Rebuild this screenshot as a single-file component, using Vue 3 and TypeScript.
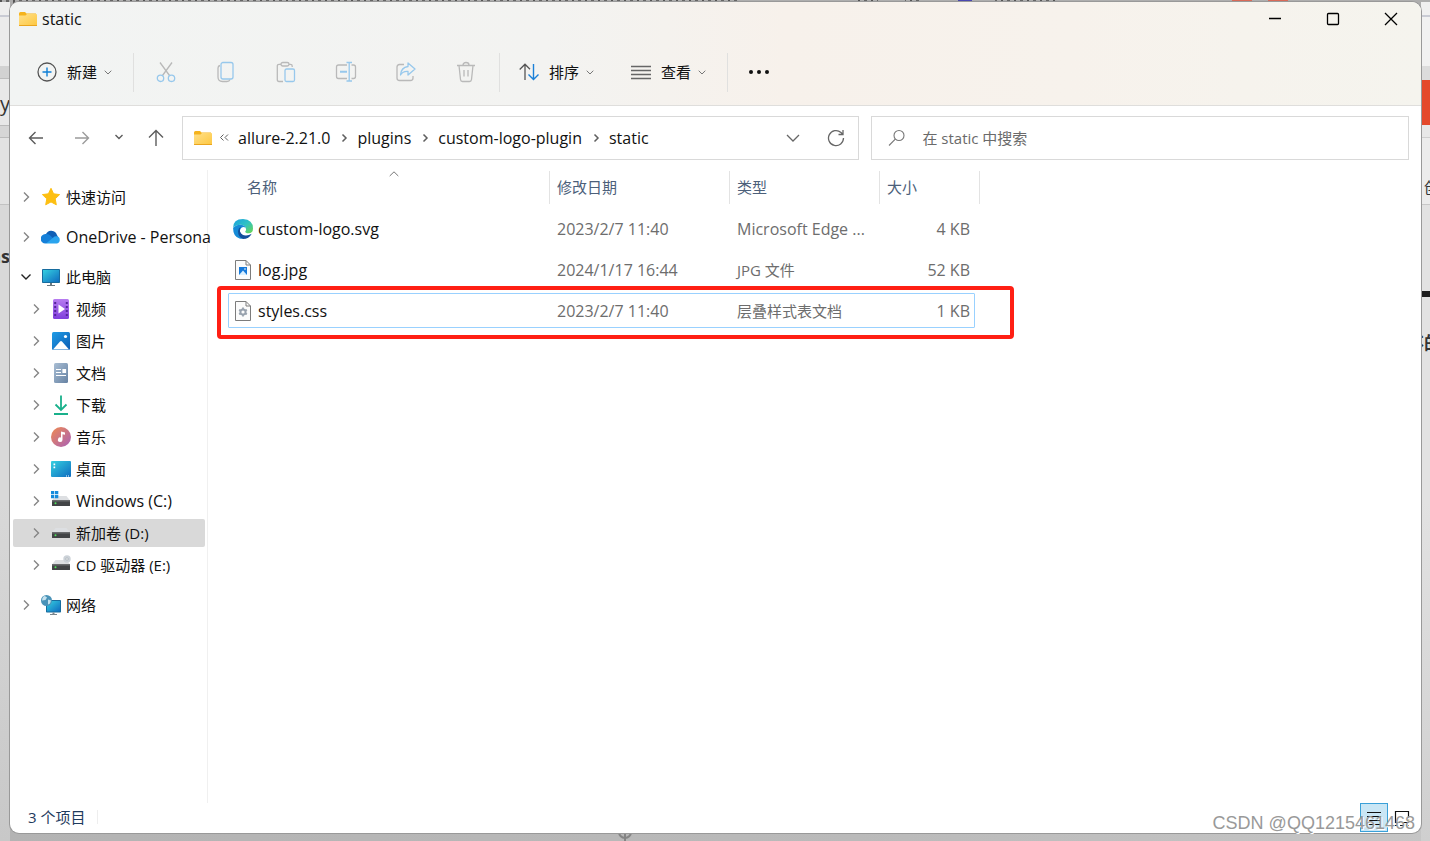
<script setup lang="ts">
import { ref } from 'vue'

interface TreeItem {
  icon: string
  label: string
  level: number
  open?: boolean
  gap?: boolean
  active?: boolean
  latin?: boolean
}
interface FileRow {
  icon: string
  name: string
  date: string
  type: string
  size: string
  selected?: boolean
  latinType?: boolean
}

const query = ref('')
const tools = [
  { id: 'cut', title: '剪切' },
  { id: 'copy', title: '复制' },
  { id: 'paste', title: '粘贴' },
  { id: 'rename', title: '重命名' },
  { id: 'share', title: '共享' },
  { id: 'delete', title: '删除' },
]
const crumbs = ['allure-2.21.0', 'plugins', 'custom-logo-plugin', 'static']
const tree: TreeItem[] = [
  { icon: 'star', label: '快速访问', level: 0, gap: true },
  { icon: 'cloud', label: 'OneDrive - Persona', level: 0, gap: true, latin: true },
  { icon: 'pc', label: '此电脑', level: 0, open: true },
  { icon: 'video', label: '视频', level: 1 },
  { icon: 'picture', label: '图片', level: 1 },
  { icon: 'document', label: '文档', level: 1 },
  { icon: 'download', label: '下载', level: 1 },
  { icon: 'music', label: '音乐', level: 1 },
  { icon: 'desktop', label: '桌面', level: 1 },
  { icon: 'windrive', label: 'Windows (C:)', level: 1, latin: true },
  { icon: 'drive', label: '新加卷 (D:)', level: 1, active: true },
  { icon: 'cddrive', label: 'CD 驱动器 (E:)', level: 1, gap: true },
  { icon: 'network', label: '网络', level: 0 },
]
const files: FileRow[] = [
  { icon: 'edge', name: 'custom-logo.svg', date: '2023/2/7 11:40', type: 'Microsoft Edge ...', size: '4 KB', latinType: true },
  { icon: 'jpg', name: 'log.jpg', date: '2024/1/17 16:44', type: 'JPG 文件', size: '52 KB' },
  { icon: 'css', name: 'styles.css', date: '2023/2/7 11:40', type: '层叠样式表文档', size: '1 KB', selected: true },
]
</script>

<template>
  <div class="screen">
    <div class="behind behind-top" aria-hidden="true"></div>
    <div class="behind behind-left" aria-hidden="true">
      <span class="frag frag-y">oy</span>
      <span class="frag frag-s">ns</span>
    </div>
    <div class="behind behind-right" aria-hidden="true">
      <i class="orange"></i>
      <span class="frag frag-c">创</span>
      <i class="bar"></i>
      <span class="frag frag-d">不的</span>
    </div>
    <svg class="target" viewBox="0 0 18 18" aria-hidden="true"><circle cx="9" cy="9" r="6" /><path d="M9 0v18M0 9h18" /></svg>

    <main class="window">
      <header class="chrome">
        <div class="titlebar">
          <svg class="folder" viewBox="0 0 18 14"><path d="M0 1.500Q0 0 1.500 0H6l1.500 1.500H17V5H0z" fill="#f5b31d" /><path d="M0 3.500h6.500L8 2h9.200q.8 0 .8.800V13.200q0 .8-.8.800H.8Q0 14 0 13.200z" fill="url(#fold)" /><path d="M0 13h18v.4q0 .6-.8.600H.8q-.8 0-.8-.6z" fill="#eaa51e" /></svg>
          <h1>static</h1>
          <div class="controls">
            <button type="button" aria-label="最小化"><svg width="14" height="14" viewBox="0 0 14 14"><path d="M1 6.500h12" /></svg></button>
            <button type="button" aria-label="最大化"><svg width="14" height="14" viewBox="0 0 14 14"><rect x="1.500" y="1.500" width="11" height="11" rx="1" /></svg></button>
            <button type="button" aria-label="关闭"><svg width="14" height="14" viewBox="0 0 14 14"><path d="M1 1l12 12M13 1L1 13" /></svg></button>
          </div>
        </div>
        <div class="toolbar">
          <button type="button" class="cmd">
            <svg width="20" height="20" viewBox="0 0 20 20"><circle cx="10" cy="10" r="9" stroke="#555" /><path d="M10 5.500v9M5.500 10h9" stroke="#0f7fd6" stroke-width="1.400" /></svg>
            <span>新建</span>
            <svg class="caret" viewBox="0 0 8 5"><path d="M.7.700L4 4 7.300.700" /></svg>
          </button>
          <i class="sep"></i>
          <button v-for="t in tools" :key="t.id" type="button" class="tool" :title="t.title" :aria-label="t.title" disabled>
            <svg width="22" height="22" viewBox="0 0 22 22">
              <g v-if="t.id === 'cut'"><path d="M5 1.500l9.500 13M17 1.500l-9.500 13" /><g class="b"><circle cx="5.500" cy="17.300" r="3.200" /><circle cx="16.500" cy="17.300" r="3.200" /></g></g>
              <g v-else-if="t.id === 'copy'"><path d="M5 4.500Q3 5 3 7v9q0 4.500 4.500 4.500H12q2.300 0 3-2" /><rect class="b" x="6" y="1.500" width="12" height="16.500" rx="2" /></g>
              <g v-else-if="t.id === 'paste'"><path d="M8 20.500H4q-1.700 0-1.700-1.700V5Q2.300 3.300 4 3.300h2M14 3.300h1.500q1.700 0 1.700 1.700v1" /><rect x="6" y="1.500" width="8" height="3.500" rx="1.700" /><rect class="b" x="10" y="8" width="9.500" height="12.500" rx="1.500" /></g>
              <g v-else-if="t.id === 'rename'"><path d="M12 4H3.500Q1.500 4 1.500 6v9.500q0 2 2 2H12M16.500 4h2q2 0 2 2v9.500q0 2-2 2h-2" /><path class="b" d="M11.500 1.500H17M11.500 20H17M14.200 1.500V20" /><path class="b" d="M5 10.800h7" stroke-width="2" /></g>
              <g v-else-if="t.id === 'share'"><path d="M9 3.500H4.500q-2.500 0-2.500 2.500v11q0 2.500 2.500 2.500h11q2.500 0 2.500-2.500v-2" /><path class="b" d="M13 2l7 6-7 6v-3.500q-5-.5-7.500 3.500Q6 6.500 13 5.500z" stroke-linejoin="round" /></g>
              <g v-else><path d="M2 4.500h18M8 4q0-2.500 3-2.500T14 4M4 4.500l1.500 14q.2 2 2 2h7q1.800 0 2-2L18 4.500M9 9v6.500M13 9v6.500" /></g>
            </svg>
          </button>
          <i class="sep"></i>
          <button type="button" class="cmd sort">
            <svg width="20" height="20" viewBox="0 0 20 20"><path d="M6 18V3M.7 7.500L6 2.200l5 5" stroke="#555" /><path d="M14.500 2v15M9.500 12.500l5 5 5-5" stroke="#1a80d8" stroke-width="1.400" /></svg>
            <span>排序</span>
            <svg class="caret" viewBox="0 0 8 5"><path d="M.7.700L4 4 7.300.700" /></svg>
          </button>
          <button type="button" class="cmd view">
            <svg width="20" height="20" viewBox="0 0 20 20"><path d="M0 4.500h20M0 8.500h20M0 12.500h20M0 16.500h20" stroke="#666" /></svg>
            <span>查看</span>
            <svg class="caret" viewBox="0 0 8 5"><path d="M.7.700L4 4 7.300.700" /></svg>
          </button>
          <i class="sep"></i>
          <button type="button" class="tool more" aria-label="更多"><svg width="22" height="6" viewBox="0 0 22 6"><circle cx="3" cy="3" r="2" /><circle cx="11" cy="3" r="2" /><circle cx="19" cy="3" r="2" /></svg></button>
        </div>
      </header>

      <nav class="navbar" aria-label="位置">
        <button type="button" class="nb" aria-label="后退"><svg width="16" height="16" viewBox="0 0 16 16"><path d="M15 8H1.500M7.500 2l-6 6 6 6" /></svg></button>
        <button type="button" class="nb dim" aria-label="前进"><svg width="16" height="16" viewBox="0 0 16 16"><path d="M1 8h13.500M8.500 2l6 6-6 6" /></svg></button>
        <button type="button" class="nb small" aria-label="最近位置"><svg width="10" height="16" viewBox="0 0 10 16"><path d="M1.500 5L5 8.500 8.500 5" /></svg></button>
        <button type="button" class="nb" aria-label="向上"><svg width="16" height="18" viewBox="0 0 16 18"><path d="M8 17V1.500M1 8.500l7-7 7 7" /></svg></button>
        <div class="address">
          <svg class="folder" viewBox="0 0 18 14"><path d="M0 1.500Q0 0 1.500 0H6l1.500 1.500H17V5H0z" fill="#f5b31d" /><path d="M0 3.500h6.500L8 2h9.200q.8 0 .8.800V13.200q0 .8-.8.800H.8Q0 14 0 13.200z" fill="url(#fold)" /><path d="M0 13h18v.4q0 .6-.8.600H.8q-.8 0-.8-.6z" fill="#eaa51e" /></svg>
          <svg class="step" viewBox="0 0 26 16"><path d="M11.500 4.500L8.500 7.500l3 3M16 4.500L13 7.500l3 3" /></svg>
          <template v-for="(c, i) in crumbs" :key="c">
            <svg v-if="i > 0" class="step" viewBox="0 0 26 16"><path d="M11.500 4.500L15 8l-3.500 3.500" stroke-width="1.500" /></svg>
            <a href="#">{{ c }}</a>
          </template>
          <button type="button" class="drop" aria-label="历史记录"><svg width="14" height="14" viewBox="0 0 14 14"><path d="M1 4l6 6 6-6" /></svg></button>
          <button type="button" class="reload" aria-label="刷新"><svg width="18" height="18" viewBox="0 0 18 18"><path d="M16.500 9A7.500 7.500 0 1 1 14 3.500L16 5.500M16 1v4.500h-4.500" /></svg></button>
        </div>
        <label class="search">
          <svg width="18" height="18" viewBox="0 0 18 18"><circle cx="11" cy="6.500" r="5" /><path d="M7.300 10.200L1 16.500" /></svg>
          <input v-model="query" type="text" placeholder="在 static 中搜索" aria-label="搜索" />
        </label>
      </nav>

      <div class="body">
        <aside class="tree">
          <a v-for="n in tree" :key="n.label" href="#" class="node" :class="{ child: n.level === 1, gap: n.gap, active: n.active, latin: n.latin }">
            <svg class="twist" :class="{ open: n.open }" viewBox="0 0 12 12"><path v-if="n.open" d="M1.500 3.500L6 8l4.500-4.500" /><path v-else d="M4 1.500L8.500 6 4 10.500" /></svg>
            <svg class="ico" viewBox="0 0 20 20">
              <path v-if="n.icon === 'star'" d="M10 1.300l2.600 5.500 6 .8-4.400 4.200 1.100 6L10 14.900l-5.300 2.900 1.100-6L1.400 7.600l6-.8z" fill="#fdbf12" stroke="#fdbf12" stroke-linejoin="round" />
              <g v-else-if="n.icon === 'cloud'"><path d="M5 7a6 6 0 0 1 10-1l2 4-9 5z" fill="#0f5fb5" /><path d="M4.500 16.500A4.700 4.700 0 0 1 4.300 7.100q2.500-.6 4.700 1.200l6 6z" fill="#1580d9" /><path d="M5 16.600L13.500 9.600q1-.6 2.500-.3a3.800 3.800 0 0 1 0 7.300z" fill="#2aa4ee" /></g>
              <g v-else-if="n.icon === 'pc'"><rect x="1" y="2" width="18" height="14" rx=".8" fill="#176c9e" /><rect x="2" y="3" width="16" height="12" fill="url(#screen)" /><path d="M9 16h2v2h3v1H6v-1h3z" fill="#69777f" /></g>
              <g v-else-if="n.icon === 'video'"><rect x="2" y="0" width="16" height="20" rx="1.500" fill="url(#violet)" /><path d="M3.200 3h2v2h-2zM3.200 7h2v2h-2zM3.200 11h2v2h-2zM3.200 15h2v2h-2zM14.800 3h2v2h-2zM14.800 7h2v2h-2zM14.800 11h2v2h-2zM14.800 15h2v2h-2z" fill="#54259b" /><path d="M7.500 5.500l6.500 4.500-6.500 4.500z" fill="#fff" /></g>
              <g v-else-if="n.icon === 'picture'"><rect x="1" y="1" width="18" height="18" rx="1.500" fill="url(#blue)" /><path d="M2 18.500l7-8q1-1 2 0l7 8z" fill="#fff" /><circle cx="14.500" cy="5.500" r="1.600" fill="#fff" /></g>
              <g v-else-if="n.icon === 'document'"><rect x="3" y="0" width="14" height="20" rx="1.500" fill="url(#slate)" /><path d="M5 6.500h5M5 9.500h5M5 12.500h10M12 6.500h2.500v3H12z" stroke="#fff" stroke-width="1.200" fill="#fff" /></g>
              <path v-else-if="n.icon === 'download'" d="M10 .5V15M4.500 9.500L10 15l5.500-5.500M3 19h14" fill="none" stroke="#19b08b" stroke-width="1.800" />
              <g v-else-if="n.icon === 'music'"><circle cx="10" cy="10" r="10" fill="url(#tune)" /><path d="M10 4.500l4 1v2.300l-2.500-.6v5.500a2.300 2.300 0 1 1-1.500-2.100z" fill="#fff" /></g>
              <g v-else-if="n.icon === 'desktop'"><rect x="0" y="2" width="20" height="16" rx="1" fill="url(#screen)" /><path d="M2.500 4.500h1.700v1.700H2.500zM2.500 7.500h1.700v1.700H2.500zM15 16.500h1v1h-1zM17 16.500h1v1h-1z" fill="#fff" /></g>
              <g v-else-if="n.icon === 'network'"><rect x="5" y="5" width="15" height="12.500" rx=".8" fill="#176c9e" /><rect x="6" y="6" width="13" height="10.500" fill="url(#screen)" /><path d="M11.500 17.500h2v1.500h2.500v1h-7v-1h2.500z" fill="#7a868d" /><circle cx="5.500" cy="5.500" r="5.500" fill="#4a93b8" /><path d="M3 1q2 0 3 1.500L4.500 5 1 5.500Q1 2.500 3 1zM7 4.500l3 1-1 3-2 1z" fill="#c5e2ee" /></g>
              <g v-else>
                <path d="M4.500 5h11L19 9.500H1z" fill="#dddfe2" /><rect x="1" y="9" width="18" height="6" rx=".6" fill="#424446" /><path d="M1 9h18v1.500H1z" fill="#6a6c6e" /><circle cx="4.500" cy="12.300" r="1" fill="#4fe05b" />
                <path v-if="n.icon === 'windrive'" d="M0 0h3.300v3.300H0zM4 0h3.300v3.300H4zM0 4h3.300v3.300H0zM4 4h3.300v3.300H4z" fill="#168bdc" />
                <g v-if="n.icon === 'cddrive'"><circle cx="16" cy="4" r="3.700" fill="#ccd2d8" /><circle cx="16" cy="4" r="1.200" fill="#fff" stroke="#9da6ae" stroke-width=".7" /></g>
              </g>
            </svg>
            <span>{{ n.label }}</span>
          </a>
        </aside>

        <section class="listing">
          <table>
            <colgroup><col class="c1" /><col class="c2" /><col class="c3" /><col class="c4" /></colgroup>
            <thead>
              <tr>
                <th scope="col">名称<svg class="asc" viewBox="0 0 10 6"><path d="M.7 5L5 .8 9.300 5" /></svg></th>
                <th scope="col">修改日期</th>
                <th scope="col">类型</th>
                <th scope="col">大小</th>
              </tr>
            </thead>
            <tbody>
              <tr v-for="f in files" :key="f.name" :class="{ selected: f.selected }">
                <td>
                  <div class="fname">
                    <svg width="20" height="20" viewBox="0 0 20 20">
                      <g v-if="f.icon === 'edge'">
                        <path d="M.1 9Q0 0 10 0q10 .5 10 9.500 0 4.800-4.500 4.800-3.300 0-3.300-1.800 1-1 .9-2.500Q12.500 6 8 5.700 3 5.500.1 9z" fill="url(#wave)" />
                        <path d="M.1 9Q3 5.300 8 5.700q4.500.3 5.100 4.300-.1-1.900-2.800-2-3.800 1-3.300 5 1 4.500 6 5-3 2.500-6.500 1.500Q0 17.500.1 9z" fill="#168bd7" />
                        <path d="M5 12q.3-3 3-4.500-1.500 2-1 5 1.500 4 6 4 3 0 5.700-1.800Q16 20 10 20q-5-2-5-8z" fill="#124f9c" />
                      </g>
                      <g v-else>
                        <path d="M2.500.5h10.500l4.500 4.500v14.500h-15z" fill="#fbfbfb" stroke="#7c7c7c" /><path d="M13 .5V5h4.500" fill="none" stroke="#7c7c7c" />
                        <g v-if="f.icon === 'jpg'"><rect x="6" y="7" width="8" height="8" fill="#1679da" /><path d="M6 15l4-4.500 4 4.500z" fill="#d9efff" /><circle cx="12" cy="9" r=".8" fill="#fff" /></g>
                        <g v-else><circle cx="10" cy="11" r="2.600" fill="none" stroke="#98a2ae" stroke-width="2" /><path d="M10 6.500v2M10 13.500v2M6.100 8.700l1.700 1M12.200 12.300l1.700 1M6.100 13.300l1.700-1M12.200 9.700l1.700-1" stroke="#98a2ae" stroke-width="1.800" /></g>
                      </g>
                    </svg>
                    <span>{{ f.name }}</span>
                  </div>
                </td>
                <td>{{ f.date }}</td>
                <td :class="{ cjk: !f.latinType }">{{ f.type }}</td>
                <td>{{ f.size }}</td>
              </tr>
            </tbody>
          </table>
        </section>
      </div>

      <footer class="status">
        <span class="count">3 个项目</span>
        <div class="modes">
          <button type="button" class="on" aria-label="详细信息"><svg width="16" height="16" viewBox="0 0 16 16"><path d="M1 2.500h14M1 6.500h14M1 10.500h14M1 14.500h14" /></svg></button>
          <button type="button" aria-label="大图标"><svg width="16" height="16" viewBox="0 0 16 16"><path d="M1.500 1.500h13v11h-13zM1 15.500h3M6 15.500h4M12 15.500h3" /></svg></button>
        </div>
      </footer>
    </main>

    <div class="credit">CSDN @QQ1215461468</div>

    <svg class="defs" width="0" height="0" aria-hidden="true">
      <defs>
        <linearGradient id="fold" x1="0" y1="0" x2="1" y2="1"><stop offset="0" stop-color="#ffe08a" /><stop offset="1" stop-color="#fdc740" /></linearGradient>
        <linearGradient id="screen" x1="0" y1="0" x2="1" y2="1"><stop offset="0" stop-color="#35d0e0" /><stop offset="1" stop-color="#0f6cc0" /></linearGradient>
        <linearGradient id="violet" x1="0" y1="0" x2="0" y2="1"><stop offset="0" stop-color="#b77cf0" /><stop offset="1" stop-color="#7f3fdc" /></linearGradient>
        <linearGradient id="blue" x1="0" y1="0" x2="1" y2="1"><stop offset="0" stop-color="#1e9ce6" /><stop offset="1" stop-color="#0d5db4" /></linearGradient>
        <linearGradient id="slate" x1="0" y1="0" x2="1" y2="1"><stop offset="0" stop-color="#a9bed4" /><stop offset="1" stop-color="#6682a3" /></linearGradient>
        <linearGradient id="tune" x1="0" y1="0" x2="1" y2="1"><stop offset="0" stop-color="#f08a50" /><stop offset="1" stop-color="#a860b8" /></linearGradient>
        <linearGradient id="wave" x1="0" y1="0" x2="1" y2="1"><stop offset="0" stop-color="#1a9fe0" /><stop offset=".5" stop-color="#2fc2c4" /><stop offset="1" stop-color="#6ed84a" /></linearGradient>
      </defs>
    </svg>
  </div>
</template>

<style>
body { background: #c4c4c4; }
</style>

<style scoped>
.screen {
  position: relative;
  box-sizing: border-box;
  display: flex;
  min-height: 100vh;
  padding: 2px 9px 8px 10px;
  overflow: hidden;
  background: linear-gradient(90deg, #b3b3b3, #bababa 60%, #c6c6c6);
  font: 16px/24px "Open Sans", "Noto Sans CJK SC", sans-serif;
  color: #111;
}
*, *::before, *::after { box-sizing: border-box; }
button {
  display: flex;
  align-items: center;
  justify-content: center;
  padding: 0;
  border: 0;
  background: none;
  font: inherit;
  color: inherit;
}
a { color: inherit; text-decoration: none; }
svg { display: block; flex: none; fill: none; }

.behind { position: absolute; overflow: hidden; }
.behind-top {
  inset: 0 0 auto 0;
  height: 16px;
  background:
    linear-gradient(90deg, transparent 740px, #aeaeae 740px, #aeaeae 858px, transparent 858px, transparent 878px, #aeaeae 878px, #aeaeae 905px, transparent 905px, transparent 920px, #aeaeae 920px, #aeaeae 958px, #4a48b0 958px, #4a48b0 972px, #aeaeae 972px, #aeaeae 995px, transparent 995px, transparent 1058px, #aeaeae 1058px, #aeaeae 1232px, #d96a58 1232px, #d96a58 1252px, #aeaeae 1252px, #aeaeae 1268px, #d96a58 1268px, #d96a58 1288px, #aeaeae 1288px),
    repeating-linear-gradient(90deg, #555 0, #555 2px, #aeaeae 2px, #aeaeae 6px, #666 6px, #666 9px, #aeaeae 9px, #aeaeae 13px);
}
.behind-left {
  inset: 2px auto 0 0;
  width: 10px;
  background: linear-gradient(#eee 0 13px, #c9cbd4 13px 15px, #ebebeb 15px 64px, #d2d2d2 64px 76px, #bdbdbd 76px 77px, #e8e8e8 77px 123px, #bbb 123px 124px, #d6d6d6 124px 135px, #bbb 135px 136px, #e2e2e2 136px 202px, #c2c2c2 202px 203px, #d8d8d8 203px 500px, #c8c8c8);
}
.behind-right {
  inset: 2px 0 0 auto;
  width: 9px;
  background: linear-gradient(#f0f0f0 0 13px, #c9cbd4 13px 15px, #f1f1f1 15px 64px, #dcdcdc 64px 78px, #e8e8e8 78px 135px, #cfcfcf 135px 136px, #ececec 136px 202px, #c8c8c8 202px 203px, #e2e2e2 203px 500px, #cfcfcf);
}
.frag { position: absolute; color: #333; white-space: nowrap; }
.frag-y { right: 0; top: 88px; font-size: 20px; line-height: 28px; }
.frag-s { right: 0; top: 242px; font-size: 18px; font-weight: 700; }
.frag-c { left: 3px; top: 173px; font-size: 15px; }
.frag-d { right: -12px; top: 329px; font-size: 18px; font-weight: 700; }
.orange { position: absolute; inset: 78px 0 auto 0; height: 45px; background: #e4492b; }
.bar { position: absolute; inset: 289px 0 auto 0; height: 6px; background: #1d1d1d; }
.target { position: absolute; left: 616px; bottom: 0; width: 18px; height: 18px; stroke: #858585; stroke-width: 2; }
.defs { position: absolute; }

.window {
  position: relative;
  display: flex;
  flex: 1;
  flex-direction: column;
  min-width: 0;
  overflow: hidden;
  border-radius: 9px;
  background: #fff;
  box-shadow: 0 0 0 1px #999;
}
.chrome {
  border-bottom: 1px solid #dfdedc;
  background: linear-gradient(90deg, #f2f4f3 0, #f3f3f1 38%, #f7f1eb 55%, #f7f2ec 75%, #f5f4ee 100%);
}
.titlebar { display: flex; align-items: center; height: 34px; padding-left: 9px; }
.folder { width: 18px; height: 14px; }
h1 { margin: 0 0 0 5px; font-size: 16px; font-weight: 400; line-height: 24px; }
.controls { display: flex; margin-left: auto; padding-right: 1px; }
.controls button { width: 58px; height: 34px; }
.controls svg { stroke: #000; stroke-width: 1.3; }

.toolbar { display: flex; align-items: center; height: 69px; padding: 3px 0 0 27px; font-size: 15px; }
.cmd { gap: 10px; height: 40px; }
.cmd svg { stroke-width: 1.3; }
.cmd .caret { width: 8px; height: 5px; margin-left: -3px; stroke: #777; stroke-width: 1; }
.sep { width: 1px; height: 39px; margin-left: 21px; background: #e0e0df; }
.tool { width: 60px; height: 40px; }
.tool svg { stroke: #b9b9b9; stroke-width: 1.3; }
.tool .b { stroke: #97c8ec; }
.sep + .tool { margin-left: 2px; }
.tool + .sep { margin-left: 3px; }
.sort { margin-left: 19px; }
.view { margin-left: 37px; }
.more.more { width: 58px; }
.more svg { fill: #111; stroke: none; }

.navbar { display: flex; padding: 10px 12px 10px 3px; }
.nb { width: 46px; height: 44px; }
.nb svg { stroke: #5c5c5c; stroke-width: 1.4; }
.nb.dim svg { stroke: #9b9b9b; }
.nb.small { width: 28px; }
.address, .search { display: flex; align-items: center; min-width: 0; height: 44px; border: 1px solid #d9d9d9; }
.address { flex: 679 1 12px; margin-left: 3px; padding-left: 11px; }
.address a { white-space: nowrap; }
.step { width: 26px; height: 16px; stroke: #5f5f5f; stroke-width: 1; }
.step + a { margin-right: 1px; }
.drop { width: 42px; height: 42px; margin-left: auto; }
.reload { width: 44px; height: 42px; }
.drop svg, .reload svg { stroke: #666; stroke-width: 1.3; }
.search { flex: 531 1 17px; margin-left: 12px; padding-left: 16px; }
.search svg { stroke: #777; stroke-width: 1.1; }
.search input {
  flex: 1;
  min-width: 0;
  margin-left: 16px;
  padding: 0;
  border: 0;
  outline: 0;
  background: none;
  font: 15px/24px "Open Sans", "Noto Sans CJK SC", sans-serif;
}
.search input::placeholder { color: #6a6a6a; opacity: 1; }

.body { display: flex; flex: 1; min-height: 0; }
.tree { width: 198px; padding: 11px 2px 0 3px; border-right: 1px solid #f0f0f0; }
.node {
  display: flex;
  align-items: center;
  height: 28px;
  margin: 2px 0 4px;
  padding-left: 7px;
  border-radius: 2px;
  font-size: 15px;
  white-space: nowrap;
}
.node.latin { font-size: 16px; }
.node.child { padding-left: 17px; }
.node.gap { margin-bottom: 12px; }
.node.active { background: #d9d9d9; }
.node span { margin-left: 5px; }
.twist { width: 12px; height: 12px; stroke: #858585; stroke-width: 1.4; }
.twist.open { stroke: #222; }
.ico { width: 20px; height: 20px; margin-left: 9px; }

.listing { flex: 1; min-width: 0; padding: 1px 0 0 20px; }
table { width: 751px; border-collapse: collapse; table-layout: fixed; }
.c1 { width: 321px; }
.c2 { width: 180px; }
.c3 { width: 150px; }
.c4 { width: 100px; }
th {
  position: relative;
  height: 38px;
  padding: 0 0 7px 8px;
  font-size: 15px;
  font-weight: 400;
  text-align: left;
  color: #4c607a;
}
th:first-child { padding-left: 19px; }
th + th::before, th:last-child::after { content: ""; position: absolute; top: 0; left: 0; width: 1px; height: 33px; background: #e3e3e3; }
th:last-child::after { right: -1px; left: auto; }
.asc { position: absolute; top: 0; left: 161px; width: 10px; height: 6px; stroke: #777; }
tbody tr { position: relative; }
td { height: 41px; padding: 0 0 2px 8px; color: #6d6d6d; white-space: nowrap; }
td:first-child { padding-left: 5px; color: #111; }
td:last-child { padding: 0 9px 2px 0; text-align: right; }
td.cjk { font-size: 15px; }
.fname { display: flex; align-items: center; gap: 5px; }
.selected td:first-child::after { content: ""; position: absolute; inset: 2px 4px 4px 0; border: 1px solid #99d1ff; border-radius: 1px; }
.selected td:first-child::before { content: ""; position: absolute; inset: -5px -35px -7px -11px; border: 4px solid #ff1f14; border-radius: 4px; }

.status { display: flex; align-items: center; height: 30px; padding: 0 6px 2px 18px; color: #1f3b5e; }
.count { padding-right: 12px; border-right: 1px solid #eee; font-size: 15px; line-height: 14px; }
.modes { display: flex; align-items: flex-start; height: 28px; margin-left: auto; }
.modes button { width: 27px; height: 29px; }
.modes .on { width: 28px; border: 1px solid #3aa0d8; background: #c9e6f5; }
.modes svg { stroke: #111; stroke-width: 1.2; }

.credit {
  position: absolute;
  right: 15px;
  bottom: 6px;
  font: 18px/24px "Liberation Sans", Arial, sans-serif;
  color: #999;
  text-shadow: 1px 1px 0 #fff;
}
</style>
